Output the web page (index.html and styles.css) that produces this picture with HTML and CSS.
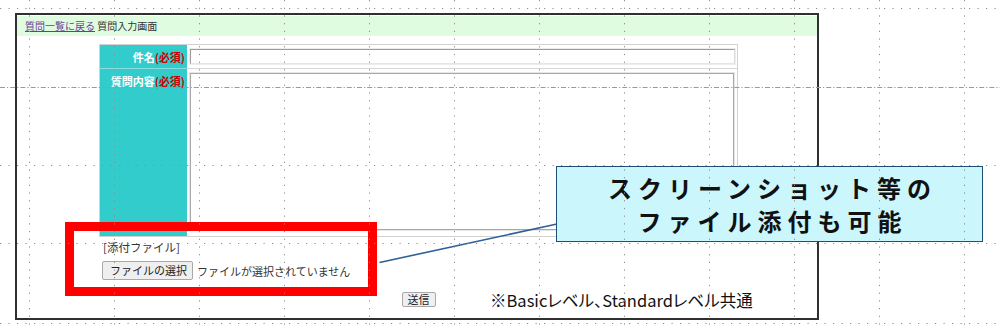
FILE: index.html
```html
<!DOCTYPE html>
<html lang="ja">
<head>
<meta charset="utf-8">
<title>質問入力画面</title>
<link rel="stylesheet" href="styles.css">
</head>
<body>
<div class="slide">
  <div class="frame">
    <div class="crumb"><a class="back" href="#">質問一覧に戻る</a> 質問入力画面</div>
    <div class="form">
      <div class="lbl">件名<span class="req">(必須)</span></div>
      <div class="val"><div class="input"></div></div>
      <div class="lbl lbl-last">質問内容<span class="req">(必須)</span></div>
      <div class="val val-last"><div class="textarea"></div></div>
    </div>
    <div class="attach">
      <div class="attach-title">[添付ファイル]</div>
      <div class="file-row"><span class="btn">ファイルの選択</span><span class="file-msg">ファイルが選択されていません</span></div>
    </div>
    <div class="submit-row"><span class="btn btn-send">送信</span></div>
  </div>

  <div class="redbox"></div>
  <svg class="connector" width="1000" height="328" viewBox="0 0 1000 328">
    <line x1="379.5" y1="262.5" x2="557" y2="224" />
  </svg>
  <div class="callout">
    <div class="callout-line">スクリーンショット等の</div>
    <div class="callout-line">ファイル添付も可能</div>
  </div>
  <div class="note">※Basicレベル、Standardレベル共通</div>

  <svg class="grid" width="1000" height="328" viewBox="0 0 1000 328">
    <g class="v">
      <line x1="29.5" y1="0" x2="29.5" y2="328"/>
      <line x1="114.5" y1="0" x2="114.5" y2="328"/>
      <line x1="199.5" y1="0" x2="199.5" y2="328"/>
      <line x1="284.5" y1="0" x2="284.5" y2="328"/>
      <line x1="369.5" y1="0" x2="369.5" y2="328"/>
      <line x1="454.5" y1="0" x2="454.5" y2="328"/>
      <line x1="539.5" y1="0" x2="539.5" y2="328"/>
      <line x1="624.5" y1="0" x2="624.5" y2="328"/>
      <line x1="709.5" y1="0" x2="709.5" y2="328"/>
      <line x1="794.5" y1="0" x2="794.5" y2="328"/>
      <line x1="879.5" y1="0" x2="879.5" y2="328"/>
      <line x1="964.5" y1="0" x2="964.5" y2="328"/>
    </g>
    <g class="h">
      <line x1="0" y1="8.5" x2="1000" y2="8.5"/>
      <line x1="0" y1="165.5" x2="1000" y2="165.5"/>
      <line x1="0" y1="243.5" x2="1000" y2="243.5"/>
      <line x1="0" y1="323.5" x2="1000" y2="323.5"/>
    </g>
    <g class="hd">
      <line x1="0" y1="87.5" x2="1000" y2="87.5"/>
    </g>
  </svg>
</div>
</body>
</html>
```
FILE: styles.css
```css
html, body {
  margin: 0;
  padding: 0;
  background: #ffffff;
}

.slide {
  position: relative;
  width: 1000px;
  height: 328px;
  overflow: hidden;
  box-sizing: border-box;
  padding: 13px 0 0 15px;
  font-family: "Noto Sans CJK JP", "Noto Sans", sans-serif;
  color: #333333;
}

.frame {
  width: 804px;
  height: 307px;
  box-sizing: border-box;
  border: 2px solid #303030;
  padding: 1px 0 0 0;
}

.crumb {
  height: 20px;
  line-height: 20px;
  background: #e0fce0;
  padding-left: 8px;
  font-size: 10px;
  color: #333333;
}

.back {
  color: #6a3f99;
  text-decoration: underline;
}

.form {
  display: grid;
  grid-template-columns: 87px 1fr;
  width: 639px;
  box-sizing: border-box;
  margin: 8px 0 0 82px;
  border: 1px solid #d2d2d2;
}

.lbl {
  background: #33cccc;
  color: #ffffff;
  font-weight: bold;
  font-size: 11px;
  line-height: 14px;
  text-align: right;
  padding: 5px 2px 0 0;
  border-bottom: 1px solid #8adede;
}

.req {
  color: #cc0000;
}

.val {
  padding: 4px 3px 4px 3px;
  border-bottom: 1px solid #d6d6d6;
}

.lbl-last,
.val-last {
  border-bottom: 0;
}

.val-last {
  padding-bottom: 6px;
}

.input {
  width: 545px;
  height: 15px;
  box-sizing: border-box;
  border: 1px solid;
  border-color: #9a9a9a #dcdcdc #e4e4e4 #9a9a9a;
  box-shadow: 0 0 0 1px #ededed;
  background: #ffffff;
}

.textarea {
  width: 544px;
  height: 157px;
  box-sizing: border-box;
  border: 1px solid #a8a8a8;
  box-shadow: 0 0 0 1px #e6e6e6;
  background: #ffffff;
}

.attach {
  margin: 3px 0 0 85px;
  font-size: 11px;
  line-height: 14px;
  color: #333333;
}

.attach-title {
  padding-left: 1px;
  font-size: 11.5px;
}

.file-row {
  margin-top: 7px;
  display: flex;
  align-items: center;
  gap: 4px;
}

.btn {
  display: inline-block;
  box-sizing: border-box;
  height: 19px;
  line-height: 17px;
  padding: 0 5px 0 7px;
  border: 1px solid #a9a9a9;
  border-radius: 2px;
  background: #efefef;
  color: #222222;
  font-size: 11px;
}

.file-msg {
  color: #333333;
}

.submit-row {
  margin-top: 12px;
  display: flex;
  justify-content: center;
  padding-left: 3px;
  font-size: 11px;
  line-height: 14px;
}

.btn-send {
  height: 15px;
  line-height: 13px;
  padding: 0 5px;
}

.redbox {
  position: absolute;
  left: 65px;
  top: 222px;
  width: 312px;
  height: 74px;
  box-sizing: border-box;
  border: 9px solid #ff0000;
}

.connector {
  position: absolute;
  left: 0;
  top: 0;
}

.connector line {
  stroke: #2e5f98;
  stroke-width: 1.6;
}

.callout {
  position: absolute;
  left: 556px;
  top: 166px;
  width: 427px;
  height: 76px;
  box-sizing: border-box;
  border: 1.5px solid #1f4e79;
  background: #cbf6fb;
  display: flex;
  flex-direction: column;
  justify-content: center;
  align-items: center;
  color: #111111;
  font-size: 24px;
  font-weight: bold;
  line-height: 33px;
}

.callout-line {
  letter-spacing: 6px;
  padding-left: 6px;
}

.note {
  position: absolute;
  left: 490px;
  top: 290px;
  font-size: 16.5px;
  line-height: 20px;
  color: #111111;
  font-feature-settings: "palt";
}

.grid {
  position: absolute;
  left: 0;
  top: 0;
  pointer-events: none;
}

.grid .v line {
  stroke: #8c8c8c;
  stroke-width: 1;
  stroke-dasharray: 1.2 6.5;
}

.grid .h line {
  stroke: #8c8c8c;
  stroke-width: 1;
  stroke-dasharray: 1.2 7.3;
}

.grid .hd line {
  stroke: #9a9a9a;
  stroke-width: 1;
  stroke-dasharray: 5 2 1.2 2;
}
```
